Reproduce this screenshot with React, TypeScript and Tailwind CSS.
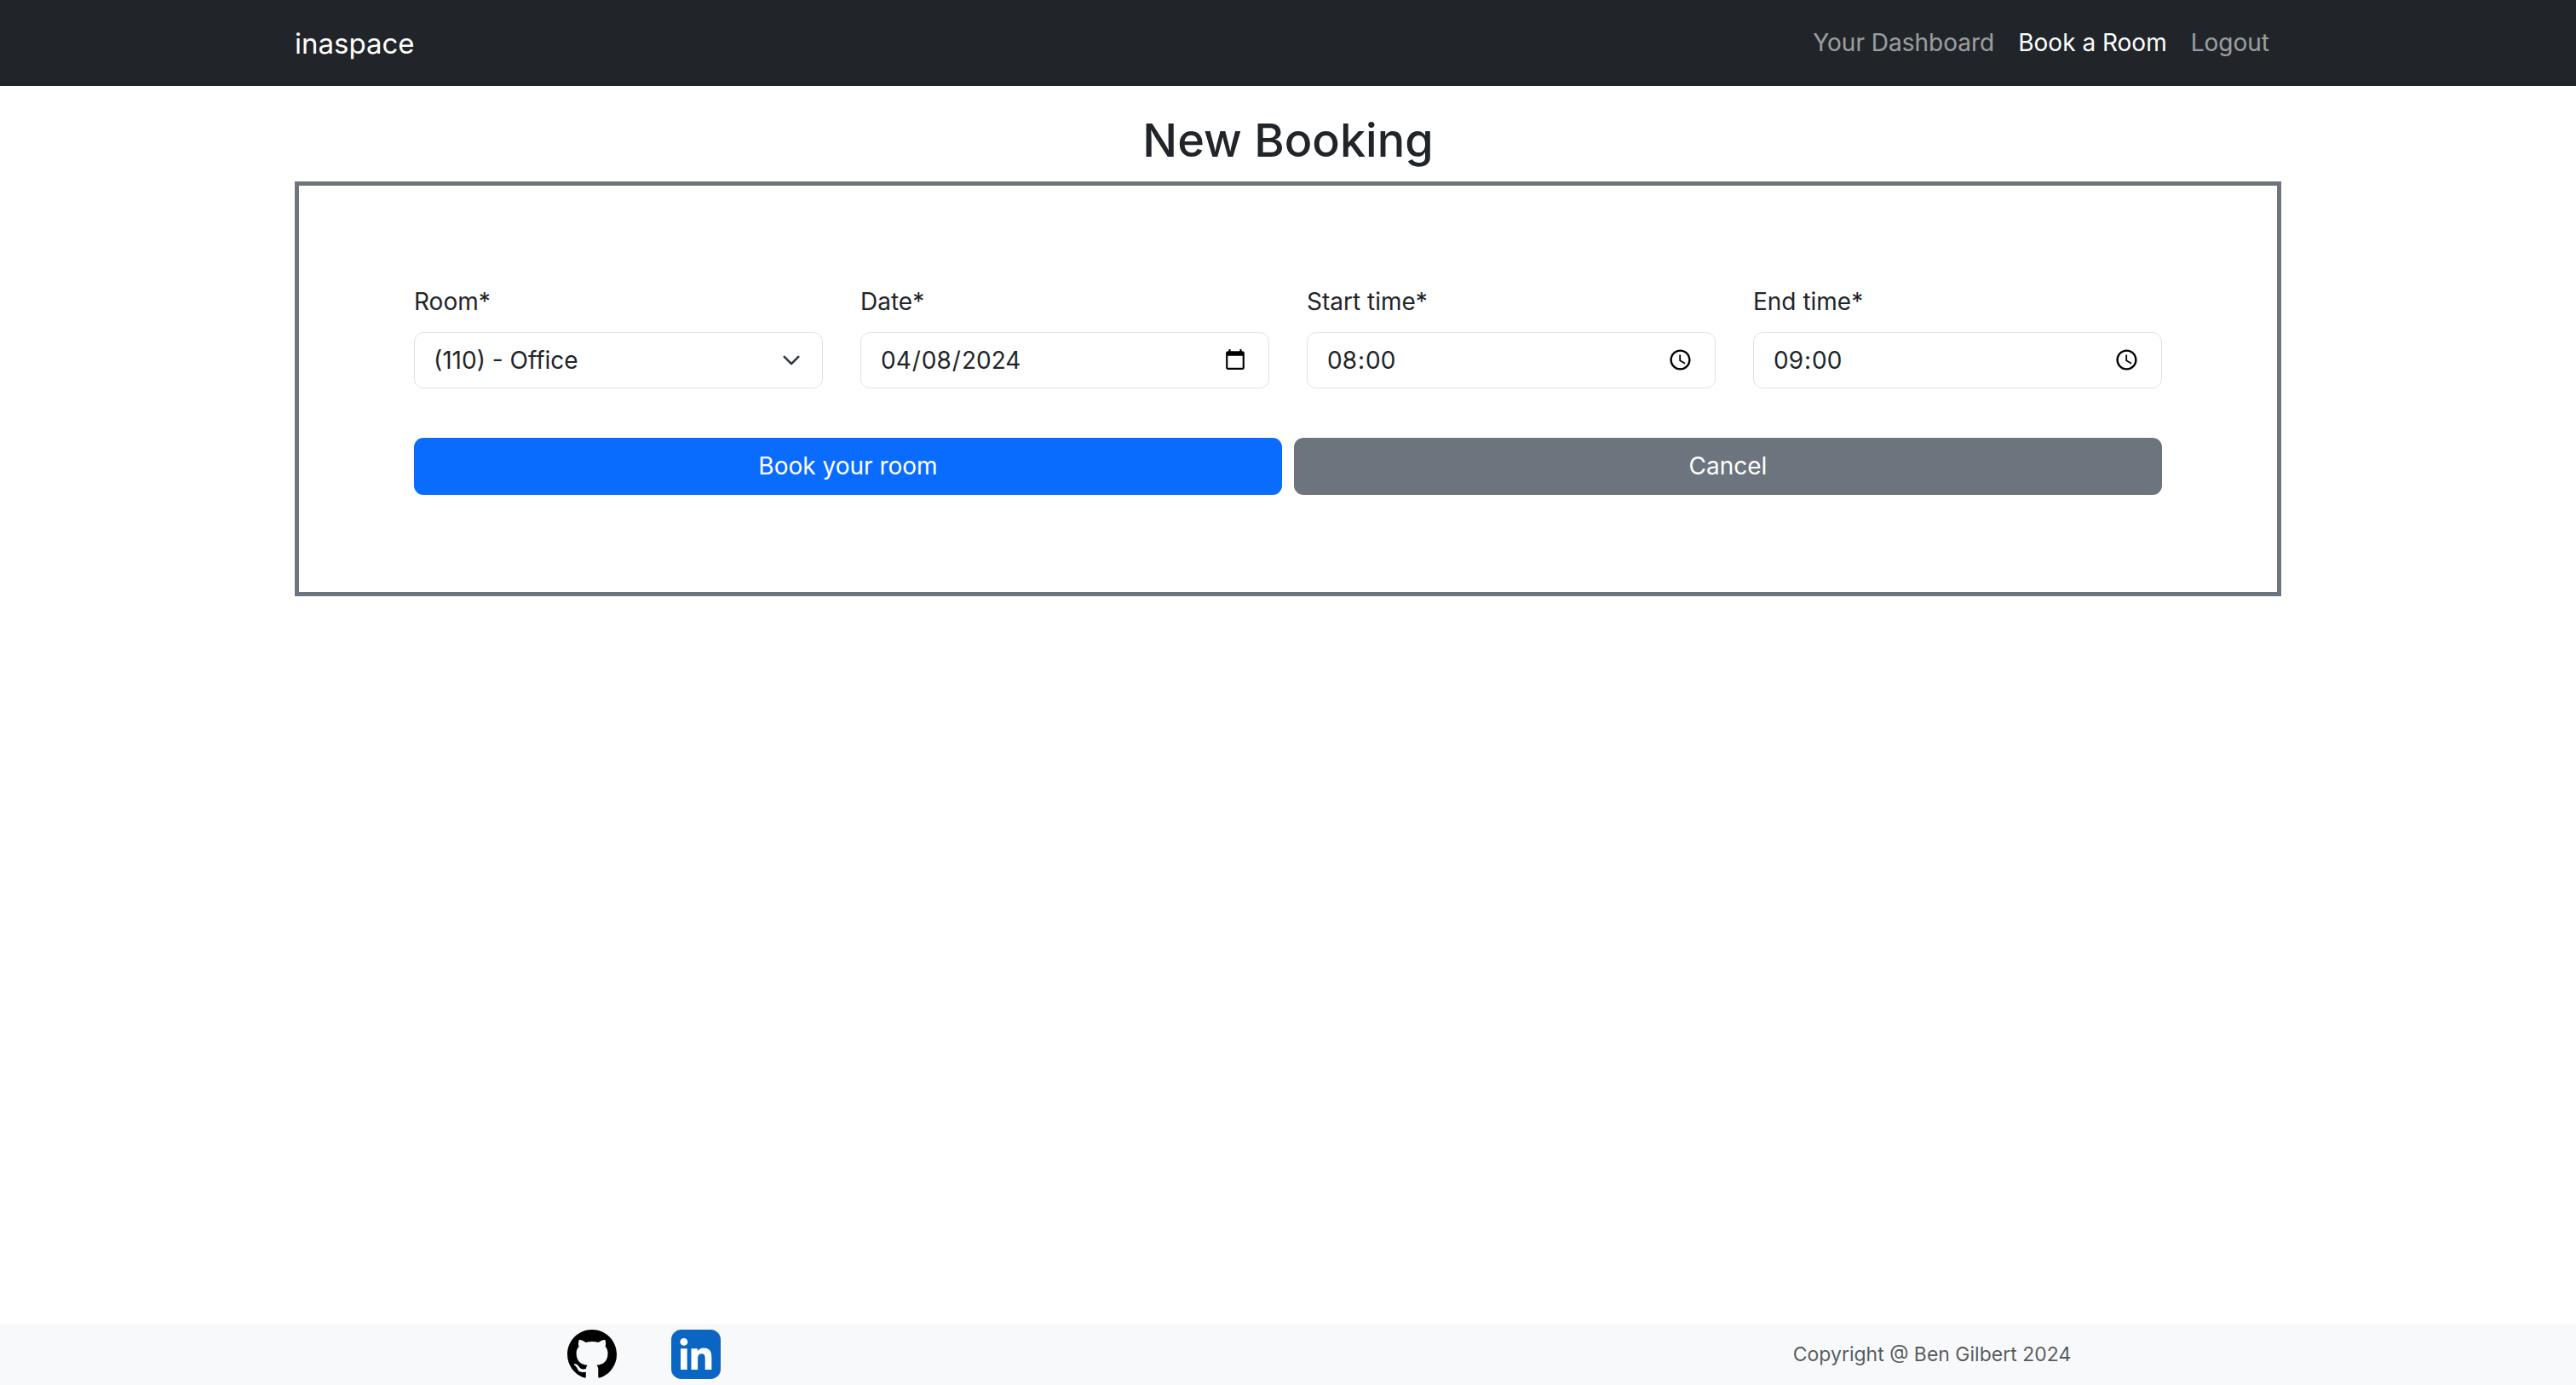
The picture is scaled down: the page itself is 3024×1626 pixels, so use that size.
import React from "react";

const fieldClass =
  "block h-[66px] w-full rounded-[11px] border border-[#dee2e6] bg-white pr-[23px] pl-[22px] text-[28px] leading-[42px] text-[#212529] [&::-webkit-datetime-edit-ampm-field]:hidden";

const links = [
  { label: "Your Dashboard", active: false },
  { label: "Book a Room", active: true },
  { label: "Logout", active: false },
];

function Field({ id, label, children }: { id: string; label: string; children: React.ReactNode }) {
  return (
    <div className="flex min-w-0 flex-col gap-[14px]">
      <label htmlFor={id} className="text-[28px] leading-[43px]">
        {label}
      </label>
      {children}
    </div>
  );
}

function GithubMark() {
  return (
    <svg viewBox="0 0 16 16" className="size-[58px]" fill="#000" aria-hidden="true">
      <path d="M8 0C3.58 0 0 3.58 0 8c0 3.54 2.29 6.53 5.47 7.59.4.07.55-.17.55-.38 0-.19-.01-.82-.01-1.49-2.01.37-2.53-.49-2.69-.94-.09-.23-.48-.94-.82-1.13-.28-.15-.68-.52-.01-.53.63-.01 1.08.58 1.23.82.72 1.21 1.87.87 2.33.66.07-.52.28-.87.51-1.07-1.78-.2-3.64-.89-3.64-3.95 0-.87.31-1.59.82-2.15-.08-.2-.36-1.02.08-2.12 0 0 .67-.21 2.2.82.64-.18 1.32-.27 2-.27s1.36.09 2 .27c1.53-1.04 2.2-.82 2.2-.82.44 1.1.16 1.92.08 2.12.51.56.82 1.27.82 2.15 0 3.07-1.87 3.75-3.65 3.95.29.25.54.73.54 1.48 0 1.07-.01 1.93-.01 2.2 0 .21.15.46.55.38A8.01 8.01 0 0 0 16 8c0-4.42-3.58-8-8-8z" />
    </svg>
  );
}

function LinkedinMark() {
  return (
    <svg viewBox="0 0 24 24" className="size-[58px]" aria-hidden="true">
      <rect width="24" height="24" rx="4.9" fill="#0a66c2" />
      <path
        fill="#fff"
        transform="translate(1.38 1.18) scale(.891)"
        d="M20.447 20.452h-3.554v-5.569c0-1.328-.027-3.037-1.852-3.037-1.853 0-2.136 1.445-2.136 2.939v5.667H9.351V9h3.414v1.561h.046c.477-.9 1.637-1.85 3.37-1.85 3.601 0 4.267 2.37 4.267 5.455v6.286zM5.337 7.433a2.062 2.062 0 01-2.063-2.065 2.064 2.064 0 112.063 2.065zm1.782 13.019H3.555V9h3.564v11.452z"
      />
    </svg>
  );
}

export default function App() {
  return (
    <div className="flex min-h-screen flex-col bg-white font-['Inter',sans-serif] text-[#212529]">
      <nav className="bg-[#212529]">
        <div className="mx-auto flex h-[101px] w-full max-w-[2332px] items-center justify-between">
          <a href="#home" className="text-[33px] leading-[54px] text-white">
            inaspace
          </a>
          <ul className="flex">
            {links.map((l) => (
              <li key={l.label}>
                <a
                  href="#nav"
                  className={
                    l.active
                      ? "block px-[14px] text-[28px] leading-[43px] text-white"
                      : "block px-[14px] text-[28px] leading-[43px] text-white/55"
                  }
                >
                  {l.label}
                </a>
              </li>
            ))}
          </ul>
        </div>
      </nav>

      <main className="mx-auto w-full max-w-[2332px] grow pt-[29px]">
        <h1 className="mb-[14px] text-center text-[54px] leading-[69px] font-medium">New Booking</h1>
        <form className="border-[5px] border-[#6c757d] px-[135px] pt-[115px] pb-[114px]">
          <div className="grid grid-cols-4 gap-x-[44px]">
            <Field id="room" label="Room*">
              <div className="relative">
                <select id="room" defaultValue="110" className={`${fieldClass} appearance-none`}>
                  <option value="110">(110) - Office</option>
                </select>
                <svg
                  viewBox="0 0 16 16"
                  className="pointer-events-none absolute top-[22px] right-[26px] size-[22px]"
                  fill="none"
                  stroke="#343a40"
                  strokeWidth="2"
                  strokeLinecap="round"
                  strokeLinejoin="round"
                  aria-hidden="true"
                >
                  <path d="m2 5 6 6 6-6" />
                </svg>
              </div>
            </Field>
            <Field id="date" label="Date*">
              <input id="date" type="date" defaultValue="2024-04-08" className={fieldClass} />
            </Field>
            <Field id="start" label="Start time*">
              <input id="start" type="time" defaultValue="08:00" className={fieldClass} />
            </Field>
            <Field id="end" label="End time*">
              <input id="end" type="time" defaultValue="09:00" className={fieldClass} />
            </Field>
          </div>
          <div className="mt-[58px] grid grid-cols-2 gap-[14px]">
            <button type="button" className="h-[67px] rounded-[11px] bg-[#0a6cff] text-[28px] leading-[43px] text-white">
              Book your room
            </button>
            <button type="button" className="h-[67px] rounded-[11px] bg-[#6c757d] text-[28px] leading-[43px] text-white">
              Cancel
            </button>
          </div>
        </form>
      </main>

      <footer className="grid h-[72px] grid-cols-2 items-center bg-[#f8f9fa]">
        <div className="flex justify-center gap-[64px]">
          <a href="#github" aria-label="GitHub">
            <GithubMark />
          </a>
          <a href="#linkedin" aria-label="LinkedIn">
            <LinkedinMark />
          </a>
        </div>
        <p className="text-center text-[23px] leading-[36px] text-[#212529]/75">Copyright @ Ben Gilbert 2024</p>
      </footer>
    </div>
  );
}
